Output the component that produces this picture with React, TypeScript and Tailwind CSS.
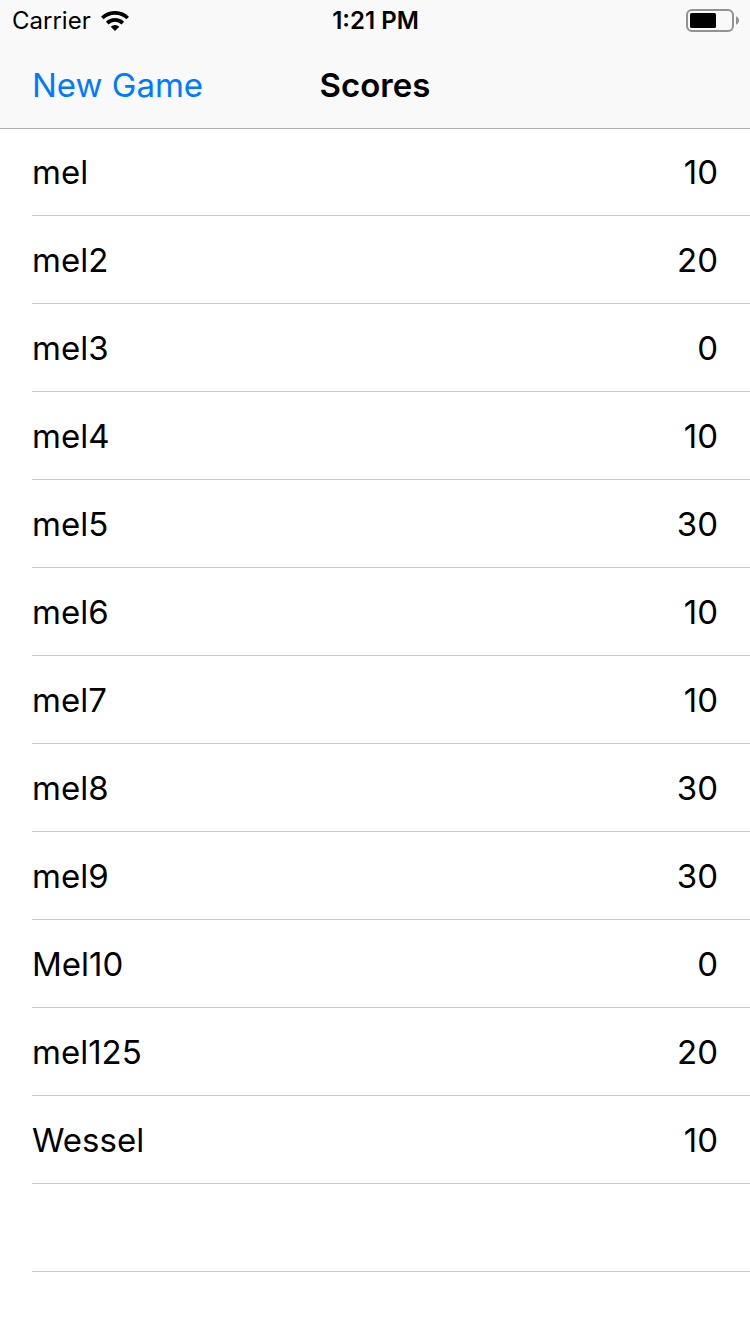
import React from "react";

interface Score {
  name: string;
  points: number;
}

const scores: Score[] = [
  { name: "mel", points: 10 },
  { name: "mel2", points: 20 },
  { name: "mel3", points: 0 },
  { name: "mel4", points: 10 },
  { name: "mel5", points: 30 },
  { name: "mel6", points: 10 },
  { name: "mel7", points: 10 },
  { name: "mel8", points: 30 },
  { name: "mel9", points: 30 },
  { name: "Mel10", points: 0 },
  { name: "mel125", points: 20 },
  { name: "Wessel", points: 10 },
];

function WifiIcon() {
  return (
    <svg width="28" height="20" viewBox="0 0 28 20" fill="none" aria-hidden="true">
      <path d="M1.3 7A18.2 18.2 0 0 1 26.7 7" stroke="#000" strokeWidth="3.7" />
      <path d="M6.2 12.100A11.200 11.200 0 0 1 21.800 12.100" stroke="#000" strokeWidth="3.7" />
      <path d="M14 20L9.700 15.800A6.200 6.200 0 0 1 18.300 15.800Z" fill="#000" />
    </svg>
  );
}

function BatteryIcon() {
  return (
    <svg width="53" height="24" viewBox="0 0 53 24" fill="none" aria-hidden="true">
      <rect x="1" y="1" width="46" height="21" rx="5" stroke="#929292" strokeWidth="2" />
      <rect x="4" y="4" width="26" height="15" rx="1.5" fill="#000" />
      <path d="M50 7.200C54 8.500 54 14.500 50 15.800z" fill="#929292" />
    </svg>
  );
}

function StatusBar() {
  return (
    <div className="grid h-[42px] grid-cols-3 items-center pl-3 pr-[11px] text-2xl">
      <div className="flex items-center gap-2.5">
        <span>Carrier</span>
        <WifiIcon />
      </div>
      <div className="text-center font-semibold">1:21 PM</div>
      <div className="flex justify-end">
        <BatteryIcon />
      </div>
    </div>
  );
}

export default function App() {
  return (
    <div className="min-h-screen bg-white font-['Inter',sans-serif] text-[33px] leading-10 text-black">
      <header className="border-b border-[#b2b2b2] bg-[#f9f9f9]">
        <StatusBar />
        <nav className="grid h-[86px] grid-cols-3 items-center px-8">
          <button type="button" className="justify-self-start text-[#007aff]">
            New Game
          </button>
          <h1 className="text-center font-semibold">Scores</h1>
        </nav>
      </header>
      <main className="-mt-px">
        <ul className="pl-8">
          {scores.map((score) => (
            <li
              key={score.name}
              className="flex h-[88px] items-center justify-between border-b border-[#c8c7cc] pr-8"
            >
              <span>{score.name}</span>
              <span>{score.points}</span>
            </li>
          ))}
        </ul>
        <div className="ml-8 h-[88px] border-b border-[#c8c7cc]" />
      </main>
    </div>
  );
}
